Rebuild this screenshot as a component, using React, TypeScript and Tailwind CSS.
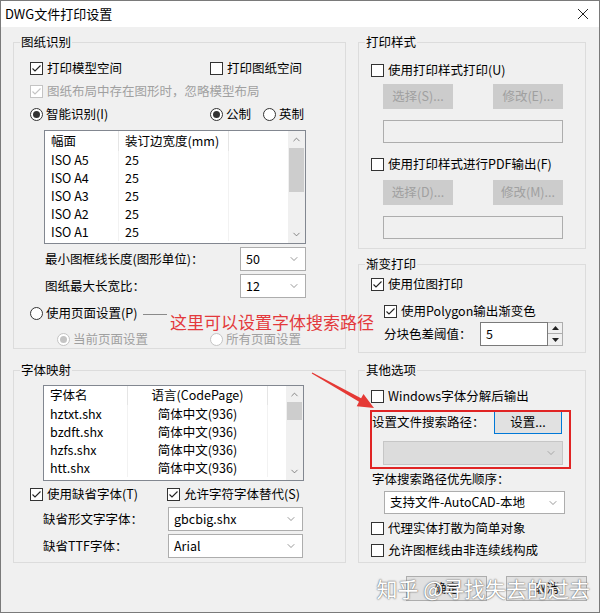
import type { ReactNode } from "react";
import { ChevronDown, ChevronUp } from "lucide-react";

const font = "font-['Noto_Sans_CJK_SC','Microsoft_YaHei',sans-serif]";

function Check({ checked, disabled, children }: { checked?: boolean; disabled?: boolean; children: ReactNode }) {
  return (
    <span className="flex items-center gap-[4px]">
      <span
        className={`flex h-[13px] w-[13px] shrink-0 items-center justify-center border bg-white ${
          disabled ? "border-[#c4c4c4]" : "border-[#333333]"
        }`}
      >
        {checked && (
          <svg width="11" height="11" viewBox="0 0 11 11">
            <polyline
              points="1.5,5.5 4,8 9.5,2.5"
              fill="none"
              stroke={disabled ? "#c4c4c4" : "#222"}
              strokeWidth="1.1"
            />
          </svg>
        )}
      </span>
      <span className={disabled ? "text-[#a0a0a0]" : ""}>{children}</span>
    </span>
  );
}

function Radio({ checked, disabled, children }: { checked?: boolean; disabled?: boolean; children: ReactNode }) {
  return (
    <span className="flex items-center gap-[3px]">
      <span
        className={`flex h-[13px] w-[13px] shrink-0 items-center justify-center rounded-full border bg-white ${
          disabled ? "border-[#c4c4c4]" : "border-[#333333]"
        }`}
      >
        {checked && (
          <span className={`h-[7px] w-[7px] rounded-full ${disabled ? "bg-[#c4c4c4]" : "bg-[#333333]"}`} />
        )}
      </span>
      <span className={disabled ? "text-[#a0a0a0]" : ""}>{children}</span>
    </span>
  );
}

function Combo({ value, className, disabled }: { value?: string; className: string; disabled?: boolean }) {
  return (
    <div
      className={`flex items-center justify-between border pl-[5px] pr-[5px] ${
        disabled ? "border-[#c6c6c6] bg-[#dcdcdc]" : "border-[#adadad] bg-white"
      } ${className}`}
    >
      <span>{value}</span>
      <ChevronDown size={12} strokeWidth={1.3} color={disabled ? "#8a8a8a" : "#606060"} />
    </div>
  );
}

function Btn({ children, className, disabled }: { children: ReactNode; className: string; disabled?: boolean }) {
  return (
    <div
      className={`flex items-center justify-center border ${
        disabled ? "border-[#cccccc] bg-[#cccccc] text-[#a0a0a0]" : "border-[#adadad] bg-[#e1e1e1]"
      } ${className}`}
    >
      {children}
    </div>
  );
}

function Group({ title, className, children }: { title: string; className: string; children: ReactNode }) {
  return (
    <div className={`relative border border-[#dcdcdc] ${className}`}>
      <span className="absolute -top-[9px] left-[6px] bg-[#f0f0f0] px-[1px] leading-[16px]">{title}</span>
      {children}
    </div>
  );
}

function ScrollBar({ thumbTop, thumbH }: { thumbTop: number; thumbH: number }) {
  return (
    <div className="relative flex w-[17px] flex-col justify-between bg-[#f0f0f0]">
      <div className="flex h-[17px] items-center justify-center">
        <ChevronUp size={11} strokeWidth={1.6} color="#606060" />
      </div>
      <div className="absolute left-[1px] right-[1px] bg-[#cdcdcd]" style={{ top: thumbTop, height: thumbH }} />
      <div className="flex h-[17px] items-center justify-center">
        <ChevronDown size={11} strokeWidth={1.6} color="#606060" />
      </div>
    </div>
  );
}

const paperRows = ["ISO A5", "ISO A4", "ISO A3", "ISO A2", "ISO A1"];
const fontRows = ["hztxt.shx", "bzdft.shx", "hzfs.shx", "htt.shx"];

export default function App() {
  return (
    <div className={`${font} flex h-[613px] w-[600px] flex-col border border-[#7a7a7a] bg-[#f0f0f0] text-[12.5px] text-black`}>
      {/* title bar */}
      <div className="flex h-[26px] items-center justify-between bg-white pl-[4px] pr-[10px]">
        <span className="text-[13px]">DWG文件打印设置</span>
        <svg width="12" height="12" viewBox="0 0 12 12">
          <path d="M1 1 L11 11 M11 1 L1 11" stroke="#222" strokeWidth="1" />
        </svg>
      </div>

      <div className="relative flex gap-[12px] pl-[12px] pt-[15px]">
        {/* left column */}
        <div className="flex w-[333px] flex-col gap-[21px]">
          <Group title="图纸识别" className="h-[307px]">
            <div className="flex flex-col pl-[16px] pt-[14px]">
              <div className="flex h-[23px] items-center">
                <div className="w-[180px]">
                  <Check checked>打印模型空间</Check>
                </div>
                <Check>打印图纸空间</Check>
              </div>
              <div className="flex h-[23px] items-center">
                <Check checked disabled>
                  图纸布局中存在图形时，忽略模型布局
                </Check>
              </div>
              <div className="flex h-[23px] items-center">
                <div className="w-[180px]">
                  <Radio checked>智能识别(I)</Radio>
                </div>
                <div className="w-[53px]">
                  <Radio checked>公制</Radio>
                </div>
                <Radio>英制</Radio>
              </div>
              <div className="ml-[14px] mt-[4px] flex h-[114px] w-[262px] border border-[#828790] bg-white">
                <div className="flex w-[243px] flex-col">
                  <div className="flex h-[20px] items-center">
                    <div className="flex h-full w-[74px] items-center border-r border-[#e5e5e5] pl-[6px]">幅面</div>
                    <div className="flex h-full w-[110px] items-center border-r border-[#e5e5e5] pl-[6px]">
                      装订边宽度(mm)
                    </div>
                  </div>
                  {paperRows.map((r) => (
                    <div key={r} className="flex h-[18px] items-center">
                      <div className="flex h-full w-[74px] items-center border-r border-[#f2f2f2] pl-[6px]">{r}</div>
                      <div className="flex h-full w-[110px] items-center border-r border-[#f2f2f2] pl-[6px]">25</div>
                    </div>
                  ))}
                </div>
                <ScrollBar thumbTop={17} thumbH={44} />
              </div>
              <div className="mt-[3px] flex h-[24px] items-center">
                <span className="ml-[15px] w-[195px]">最小图框线长度(图形单位)：</span>
                <Combo value="50" className="h-[24px] w-[66px]" />
              </div>
              <div className="mt-[3px] flex h-[24px] items-center">
                <span className="ml-[15px] w-[195px]">图纸最大长宽比：</span>
                <Combo value="12" className="h-[24px] w-[66px]" />
              </div>
              <div className="mt-[4px] flex h-[22px] items-center">
                <Radio>使用页面设置(P)</Radio>
              </div>
              <div className="mt-[4px] flex h-[22px] items-center pl-[27px]">
                <div className="w-[153px]">
                  <Radio checked disabled>
                    当前页面设置
                  </Radio>
                </div>
                <Radio disabled>所有页面设置</Radio>
              </div>
            </div>
          </Group>

          <Group title="字体映射" className="h-[193px]">
            <div className="flex flex-col pl-[16px] pt-[14px]">
              <div className="ml-[13px] flex h-[96px] w-[261px] border border-[#828790] bg-white">
                <div className="flex w-[242px] flex-col">
                  <div className="flex h-[19px] items-center">
                    <div className="flex h-full w-[84px] items-center border-r border-[#e5e5e5] pl-[6px]">字体名</div>
                    <div className="flex h-full w-[140px] items-center justify-center border-r border-[#e5e5e5]">
                      语言(CodePage)
                    </div>
                  </div>
                  {fontRows.map((r) => (
                    <div key={r} className="flex h-[18px] items-center">
                      <div className="flex h-full w-[84px] items-center border-r border-[#f2f2f2] pl-[6px]">{r}</div>
                      <div className="flex h-full w-[140px] items-center justify-center border-r border-[#f2f2f2]">
                        简体中文(936)
                      </div>
                    </div>
                  ))}
                </div>
                <ScrollBar thumbTop={16} thumbH={18} />
              </div>
              <div className="mt-[3px] flex h-[20px] items-center">
                <div className="w-[137px]">
                  <Check checked>使用缺省字体(T)</Check>
                </div>
                <Check checked>允许字符字体替代(S)</Check>
              </div>
              <div className="mt-[3px] flex h-[24px] items-center">
                <span className="ml-[13px] w-[125px]">缺省形文字字体：</span>
                <Combo value="gbcbig.shx" className="h-[24px] w-[135px]" />
              </div>
              <div className="mt-[3px] flex h-[24px] items-center">
                <span className="ml-[13px] w-[125px]">缺省TTF字体：</span>
                <Combo value="Arial" className="h-[24px] w-[135px]" />
              </div>
            </div>
          </Group>
        </div>

        {/* right column */}
        <div className="flex w-[228px] flex-col">
          <Group title="打印样式" className="h-[207px]">
            <div className="flex flex-col pl-[12px] pt-[17px]">
              <div className="flex h-[20px] items-center">
                <Check>使用打印样式打印(U)</Check>
              </div>
              <div className="ml-[12px] mt-[4px] flex gap-[40px]">
                <Btn disabled className="h-[25px] w-[70px]">
                  选择(S)...
                </Btn>
                <Btn disabled className="h-[25px] w-[70px]">
                  修改(E)...
                </Btn>
              </div>
              <div className="ml-[12px] mt-[11px] h-[23px] w-[180px] border border-[#adadad] bg-[#f0f0f0]" />
              <div className="mt-[11px] flex h-[20px] items-center">
                <Check>使用打印样式进行PDF输出(F)</Check>
              </div>
              <div className="ml-[12px] mt-[6px] flex gap-[40px]">
                <Btn disabled className="h-[25px] w-[70px]">
                  选择(D)...
                </Btn>
                <Btn disabled className="h-[25px] w-[70px]">
                  修改(M)...
                </Btn>
              </div>
              <div className="ml-[12px] mt-[11px] h-[23px] w-[180px] border border-[#adadad] bg-[#f0f0f0]" />
            </div>
          </Group>

          <Group title="渐变打印" className="mt-[15px] h-[89px]">
            <div className="flex flex-col pl-[12px] pt-[9px]">
              <div className="flex h-[20px] items-center">
                <Check checked>使用位图打印</Check>
              </div>
              <div className="ml-[13px] mt-[7px] flex h-[20px] items-center">
                <Check checked>使用Polygon输出渐变色</Check>
              </div>
              <div className="ml-[13px] mt-[1px] flex h-[24px] items-center">
                <span className="w-[96px]">分块色差阈值：</span>
                <div className="flex h-[24px] w-[68px] items-center border border-[#7a7a7a] bg-white pl-[5px]">5</div>
                <div className="flex h-[24px] w-[15px] flex-col">
                  <div className="flex h-[12px] items-center justify-center border border-l-0 border-[#adadad] bg-[#f0f0f0]">
                    <svg width="7" height="4" viewBox="0 0 7 4">
                      <path d="M0 4 L3.5 0 L7 4 Z" fill="#222" />
                    </svg>
                  </div>
                  <div className="flex h-[12px] items-center justify-center border border-l-0 border-t-0 border-[#adadad] bg-[#f0f0f0]">
                    <svg width="7" height="4" viewBox="0 0 7 4">
                      <path d="M0 0 L3.5 4 L7 0 Z" fill="#222" />
                    </svg>
                  </div>
                </div>
              </div>
            </div>
          </Group>

          <Group title="其他选项" className="mt-[17px] h-[193px]">
            <div className="flex flex-col pl-[12px] pt-[15px]">
              <div className="flex h-[20px] items-center">
                <Check>Windows字体分解后输出</Check>
              </div>
              <div className="ml-[1px] mt-[4px] flex h-[24px] items-center">
                <span className="w-[122px]">设置文件搜索路径：</span>
                <div className="flex h-[24px] w-[68px] items-center justify-center border border-[#0078d7] bg-[#e1e1e1]">
                  设置...
                </div>
              </div>
              <Combo disabled className="ml-[12px] mt-[7px] h-[24px] w-[180px]" />
              <div className="ml-[1px] mt-[4px] flex h-[20px] items-center">字体搜索路径优先顺序：</div>
              <Combo value="支持文件-AutoCAD-本地" className="ml-[13px] mt-[2px] h-[23px] w-[181px]" />
              <div className="mt-[4px] flex h-[20px] items-center">
                <Check>代理实体打散为简单对象</Check>
              </div>
              <div className="mt-[2px] flex h-[20px] items-center">
                <Check>允许图框线由非连续线构成</Check>
              </div>
            </div>
          </Group>
        </div>

        {/* annotation overlays */}
        <div className="absolute left-[142px] top-[287px] h-[1px] w-[24px] bg-[#8a8a8a]" />
        <span className="absolute left-[169px] top-[286px] text-[17px] leading-[17px] text-[#e3393c]">
          这里可以设置字体搜索路径
        </span>
        <div className="absolute left-[369px] top-[383px] h-[59px] w-[201px] border-2 border-[#e02424]" />
        <svg className="absolute left-0 top-0" width="598" height="500" viewBox="1 27 598 500">
          <polygon
            points="312.25,372.6 361.1,398.3 363.5,394 374,408 356.7,406.2 359.1,401.8 311.75,373.4"
            fill="#e53935"
          />
        </svg>
      </div>

      {/* buttons */}
      <div className="relative mt-[13px] flex justify-end gap-[19px] pr-[12px]">
        <Btn className="h-[25px] w-[81px]">确定</Btn>
        <Btn className="h-[25px] w-[81px]">取消</Btn>
        <span className="absolute right-[9px] top-[-1px] text-[21px] leading-[26px] text-white [text-shadow:0_0_2px_#6b6b6b,0_0_1px_#6b6b6b]">
          知乎 @寻找失去的过去
        </span>
      </div>
    </div>
  );
}
